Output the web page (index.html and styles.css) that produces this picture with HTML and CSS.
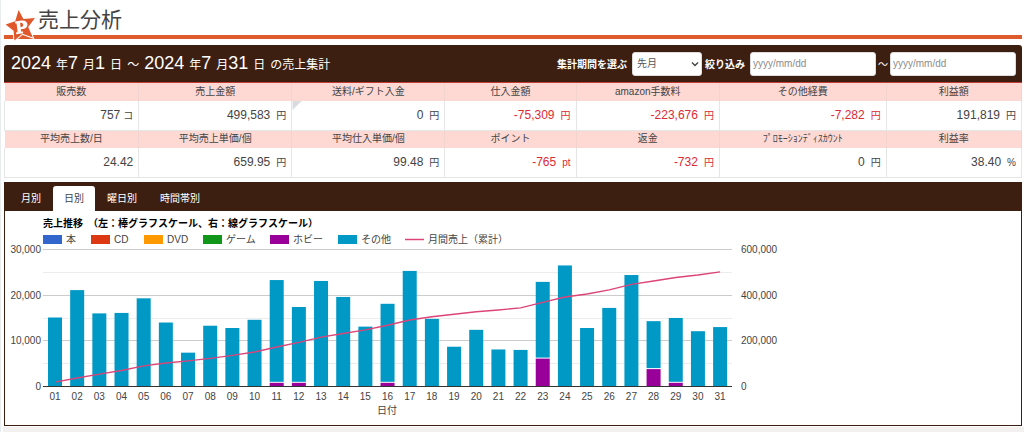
FILE: index.html
```html
<!DOCTYPE html>
<html lang="ja">
<head>
<meta charset="utf-8">
<title>売上分析</title>
<link rel="stylesheet" href="styles.css">
</head>
<body>
<div class="page">
  <header class="title-bar">
    <svg class="logo" viewBox="0 0 31 31" aria-hidden="true">
      <path d="M13.6 0 L18.4 9 L30 8 L23.2 17 L27.8 27.6 L17.4 23.8 L9.4 30.4 L8.6 20.8 L0.6 14.4 L10.2 11.2 Z" fill="#e0572b" stroke="#fff" stroke-width="2" paint-order="stroke"/>
      <path fill-rule="evenodd" d="M10 11.6 L16.4 10.6 C24 9.6 24.4 18.4 18 19 L15.8 19.2 L16.1 21.6 L18 21.6 L18.2 23.2 L11.2 24.2 L11 22.6 L12.6 22.2 L11.6 13.4 L10.2 13.4 Z M15.1 12.8 L15.6 17.2 C19.4 17 19 12 15.1 12.8 Z" fill="#fff"/>
    </svg>
    <h1>売上分析</h1>
  </header>

  <section class="summary">
    <div class="summary-head">
      <h2 class="period">2024 <span>年</span>7 <span>月</span>1 <span>日</span> <span>～</span> 2024 <span>年</span>7 <span>月</span>31 <span>日</span> <span>の売上集計</span></h2>
      <form class="filters">
        <label for="range">集計期間を選ぶ</label>
        <span class="select-wrap">
          <select id="range"><option>先月</option></select>
          <svg class="chevron" viewBox="0 0 8 6" aria-hidden="true"><path d="M1 1.5 L4 4.5 L7 1.5" fill="none" stroke="#444" stroke-width="1.4"/></svg>
        </span>
        <label class="narrow" for="from">絞り込み</label>
        <input id="from" type="text" placeholder="yyyy/mm/dd">
        <span class="tilde">～</span>
        <input type="text" placeholder="yyyy/mm/dd" aria-label="終了日">
      </form>
    </div>
    <table class="totals">
      <colgroup><col class="c1"><col class="c2"><col class="c2"><col class="c3"><col class="c4"><col class="c5"><col class="c6"></colgroup>
      <tr><th>販売数</th><th>売上金額</th><th>送料/ギフト入金</th><th>仕入金額</th><th>amazon手数料</th><th>その他経費</th><th>利益額</th></tr>
      <tr><td>757<span class="unit near">コ</span></td><td>499,583<span class="unit">円</span></td><td class="marked">0<span class="unit">円</span></td><td class="minus">-75,309<span class="unit">円</span></td><td class="minus">-223,676<span class="unit">円</span></td><td class="minus">-7,282<span class="unit">円</span></td><td>191,819<span class="unit">円</span></td></tr>
      <tr><th>平均売上数/日</th><th>平均売上単価/個</th><th>平均仕入単価/個</th><th>ポイント</th><th>返金</th><th>ﾌﾟﾛﾓｰｼｮﾝﾃﾞｨｽｶｳﾝﾄ</th><th>利益率</th></tr>
      <tr><td>24.42</td><td>659.95<span class="unit">円</span></td><td>99.48<span class="unit">円</span></td><td class="minus">-765<span class="unit">pt</span></td><td class="minus">-732<span class="unit">円</span></td><td>0<span class="unit">円</span></td><td>38.40<span class="unit">%</span></td></tr>
    </table>
  </section>

  <section class="analysis">
    <nav class="tabs">
      <button type="button">月別</button>
      <button type="button" class="active">日別</button>
      <button type="button">曜日別</button>
      <button type="button">時間帯別</button>
    </nav>
    <div class="panel">
      <svg id="chart" class="chart" viewBox="0 0 780 214" role="img" aria-label="売上推移">
        <text class="chart-title" x="37" y="16">売上推移　（左：棒グラフスケール、右：線グラフスケール）</text>
      </svg>
    </div>
  </section>
</div>
<footer class="strip"></footer>
<script src="chart.js"></script>
</body>
</html>
```

FILE: styles.css
```css
* {
  box-sizing: border-box;
}

body {
  margin: 0;
  min-height: 100vh;
  display: flex;
  flex-direction: column;
  background: #fff;
  border-left: 1px solid #e9edf0;
  color: #444;
  font-family: "Liberation Sans", "Noto Sans CJK JP", sans-serif;
  font-size: 10px;
  overflow: hidden;
}

.page {
  padding: 0 2px 0 3px;
}

.title-bar {
  position: relative;
  height: 39px;
  padding-left: 34px;
  border-bottom: 4px solid #de5b2e;
}

.logo {
  position: absolute;
  left: 1px;
  top: 10px;
  width: 31px;
  height: 31px;
  overflow: visible;
}

h1 {
  margin: 0;
  padding-top: 3px;
  font-size: 21px;
  line-height: 30px;
  font-weight: 400;
  font-family: "Noto Sans CJK JP", sans-serif;
}

.summary {
  margin-top: 6px;
}

.summary-head {
  display: flex;
  justify-content: space-between;
  align-items: center;
  height: 38px;
  padding: 0 6px 0 7px;
  background: #3d1f11;
  border-bottom: 1px solid #c23b35;
  border-radius: 3px 3px 0 0;
  color: #fff;
}

.period {
  margin: 0;
  font-size: 18px;
  font-weight: 400;
  line-height: 24px;
  white-space: nowrap;
}

.period span {
  font-size: 12px;
}

.filters {
  display: flex;
  align-items: center;
  margin: 0;
}

.filters label {
  font-weight: 700;
  margin-right: 5px;
}

.filters .narrow {
  margin-left: 3px;
}

.filters input,
.filters select {
  height: 24px;
  border: 1px solid #ddd;
  border-radius: 3px;
  background: #fff;
  color: #555;
  font: inherit;
}

.filters input {
  width: 126px;
  padding: 0 2px;
}

.filters input::placeholder {
  color: #8b8b8b;
}

.select-wrap {
  position: relative;
  display: flex;
}

.filters select {
  width: 70px;
  padding: 0 4px;
  appearance: none;
}

.chevron {
  position: absolute;
  right: 3px;
  top: 9px;
  width: 8px;
  height: 6px;
  pointer-events: none;
}

.tilde {
  width: 14px;
  text-align: center;
}

.totals {
  width: 100%;
  border-collapse: collapse;
  table-layout: fixed;
}

.c1 { width: 13.2%; }
.c2 { width: 15.05%; }
.c3 { width: 12.9%; }
.c4 { width: 14.1%; }
.c5 { width: 16.4%; }
.c6 { width: 13.3%; }

.totals th {
  height: 18px;
  padding: 0;
  background: #fed9d4;
  border-right: 1px solid #f3d3ce;
  font-weight: 400;
  line-height: 16px;
  white-space: nowrap;
}

.totals td {
  height: 29px;
  padding: 0 5px;
  border: 1px solid #e6e6e6;
  border-top: 0;
  font-size: 12px;
  line-height: 16px;
  text-align: right;
  white-space: nowrap;
}

.totals .marked {
  background: linear-gradient(135deg, #d9dcdf 6px, transparent 7px);
}

.totals .minus {
  color: #dc2a33;
}

.unit {
  margin-left: 6px;
  font-size: 10px;
}

.unit.near {
  margin-left: 3px;
}

.analysis {
  margin-top: 4px;
  border: 1px solid #3d1f11;
  border-top: 0;
}

.tabs {
  display: flex;
  align-items: flex-end;
  gap: 1px;
  height: 29px;
  padding-left: 5px;
  background: #3d1f11;
}

.tabs button {
  height: 25px;
  padding: 0 11px 2px;
  border: 0;
  border-radius: 3px 3px 0 0;
  background: none;
  color: #fff;
  font: inherit;
}

.tabs .active {
  background: #fff;
  color: #444;
}

.panel {
  padding-left: 1px;
  background: #fff;
}

.chart {
  display: block;
  width: 100%;
  max-width: 780px;
}

.chart text {
  font-size: 10px;
  fill: #444;
}

.chart .chart-title {
  font-weight: 700;
  fill: #000;
}

.strip {
  flex: 1;
  margin: 1px 0 0 2px;
  background: #f3f1f0;
}
```

FILE: chart.js
```js
const svg = document.getElementById("chart");

function add(name, attrs, text) {
  const node = document.createElementNS("http://www.w3.org/2000/svg", name);
  for (const key in attrs) node.setAttribute(key, attrs[key]);
  if (text !== undefined) node.textContent = text;
  svg.appendChild(node);
}

const base = 175;
const left = 37;
const right = 726;
const plotHeight = 137;

const sales = [15000, 21000, 15900, 16000, 19200, 13900, 7300, 13200, 12700, 14500, 23200,
  17300, 23000, 19500, 13000, 18000, 25200, 14700, 8600, 12300, 8000, 7900,
  22800, 26400, 12700, 17100, 24300, 14200, 14900, 12000, 12900];
const hobby = { 11: 700, 12: 700, 16: 700, 23: 6000, 28: 3700, 29: 700 };
const cumulative = [17, 35, 52, 68, 88, 101, 110, 121, 134, 149, 171, 191, 214, 230, 246,
  266, 289, 303, 314, 325, 333, 342, 366, 390, 403, 421, 445, 460, 475, 486, 499.6];

const legend = [
  [37, "#3366cc", "本"], [85, "#dc3912", "CD"], [138, "#ff9900", "DVD"],
  [197, "#109618", "ゲーム"], [264, "#990099", "ホビー"], [332, "#0099c6", "その他"]
];
for (const [x, color, label] of legend) {
  add("rect", { x, y: 24, width: 19, height: 9, fill: color });
  add("text", { x: x + 23, y: 32 }, label);
}
add("path", { d: "M399 28.5 H418", stroke: "#dd4477", "stroke-width": 1.5 });
add("text", { x: 422, y: 32 }, "月間売上（累計）");

for (let i = 0; i < 6; i++) {
  const y = Math.round(base - plotHeight * (6 - i) / 6);
  add("rect", { x: left, y, width: right - left, height: 1, fill: i % 2 ? "#ececec" : "#cccccc" });
}
["0", "10,000", "20,000", "30,000"].forEach((label, i) => {
  add("text", { x: 35, y: base + 4 - i * plotHeight / 3, "text-anchor": "end" }, label);
});
["0", "200,000", "400,000", "600,000"].forEach((label, i) => {
  add("text", { x: 735, y: base + 4 - i * plotHeight / 3 }, label);
});

const step = 22.17;
const points = [];
sales.forEach((value, i) => {
  const day = i + 1;
  const center = 49 + i * step;
  const height = value / 30000 * plotHeight;
  const hobbyHeight = (hobby[day] || 0) / 30000 * plotHeight;
  const gap = hobbyHeight ? 1 : 0;
  add("rect", { x: center - 7, y: base - height, width: 14, height: height - hobbyHeight - gap, fill: "#0099c6" });
  if (hobbyHeight) {
    add("rect", { x: center - 7, y: base - hobbyHeight, width: 14, height: hobbyHeight, fill: "#990099" });
  }
  add("text", { x: center, y: 189, "text-anchor": "middle" }, String(day).padStart(2, "0"));
  points.push(`${center},${base - cumulative[i] / 600 * plotHeight}`);
});
add("rect", { x: left, y: base, width: right - left, height: 1, fill: "#333" });
add("polyline", { points: points.join(" "), fill: "none", stroke: "#dd4477", "stroke-width": 1.4 });
add("text", { x: 381, y: 203, "text-anchor": "middle" }, "日付");
```
